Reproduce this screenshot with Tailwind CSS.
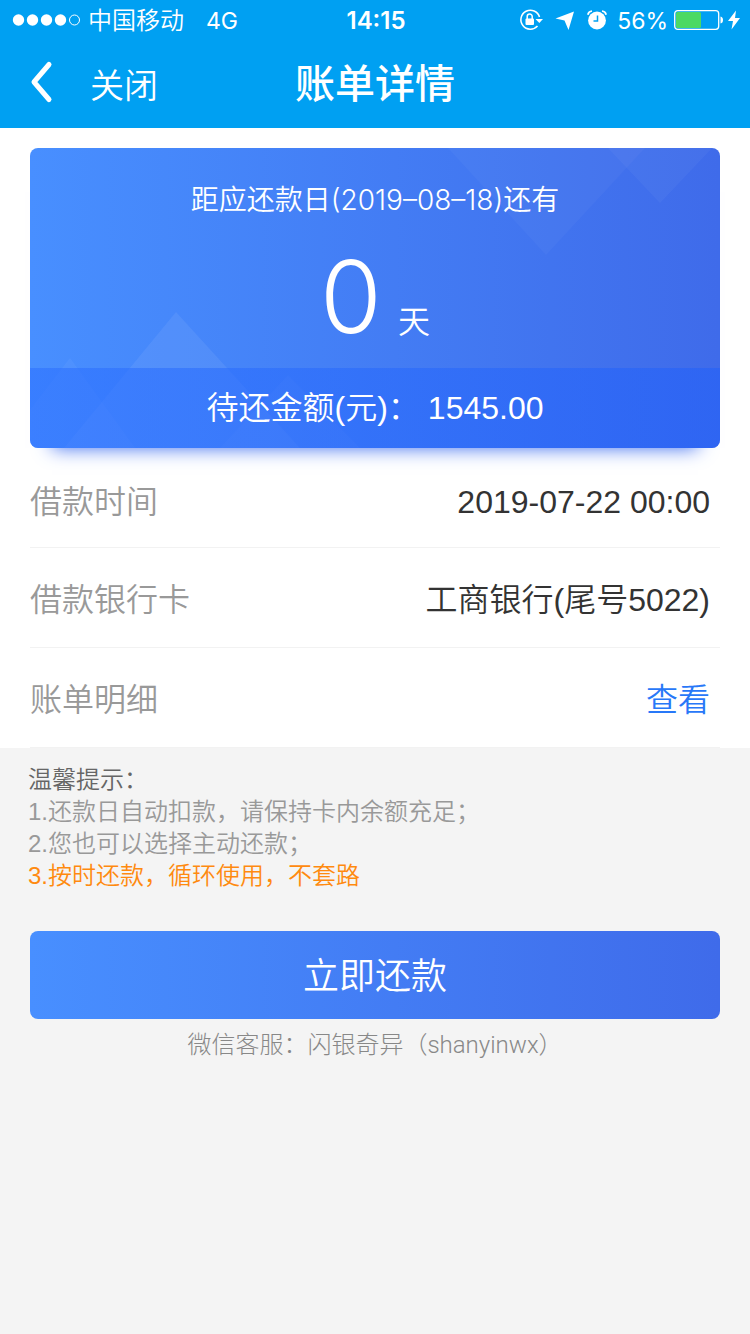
<!DOCTYPE html>
<html lang="zh-CN">
<head>
<meta charset="utf-8">
<meta name="viewport" content="width=device-width, initial-scale=1">
<title>账单详情</title>
<script src="https://cdn.jsdelivr.net/npm/@tailwindcss/browser@4"></script>
</head>
<body class="min-h-screen bg-[#f4f4f4] font-['Liberation_Sans','Noto_Sans_CJK_SC',sans-serif] font-[350] text-[#333]">
<header class="bg-[#00a0f2] text-white">
  <div class="grid h-10 grid-cols-[1fr_auto_1fr] items-center pr-2.5 pl-3 font-['Inter','Noto_Sans_CJK_SC',sans-serif] text-2xl leading-9 font-normal">
    <div class="flex items-center">
      <svg class="mr-1.5 h-3 w-[70px]" viewBox="0 0 70 12" fill="#fff" aria-hidden="true">
        <circle cx="6.500" cy="6" r="5.700"/><circle cx="20.500" cy="6" r="5.700"/><circle cx="34.500" cy="6" r="5.700"/><circle cx="48.500" cy="6" r="5.700"/><circle cx="62.500" cy="6" r="5" fill="none" stroke="#fff"/>
      </svg>
      <span class="mr-[22px] pt-0.5 font-[350]">中国移动</span>
      <span class="pt-0.5 text-[23px] leading-9">4G</span>
    </div>
    <span class="pt-0.5 text-2xl leading-9 font-semibold">14:15</span>
    <div class="flex items-center justify-end">
      <svg class="mr-3 h-6 w-6" viewBox="0 0 24 24" fill="none" stroke="#fff" aria-hidden="true">
        <path d="M20.500 9A9.500 9.500 0 1 0 18.500 18" stroke-width="1.500"/>
        <path d="M16.500 11H24L20.300 15Z" fill="#fff" stroke="none"/>
        <rect x="6.500" y="10.500" width="8.500" height="6.500" rx="1" fill="#fff" stroke="none"/>
        <path d="M8.200 11V8.500a2.500 2.500 0 0 1 5 0V11" stroke-width="1.500"/>
      </svg>
      <svg class="mr-3 h-5 w-5" viewBox="0 0 20 20" fill="#fff" aria-hidden="true"><path d="M19 1.500L.5 8.500L9.500 10.500L13.500 20Z"/></svg>
      <svg class="mr-2.5 h-5 w-5" viewBox="0 0 20 20" fill="none" stroke="#fff" aria-hidden="true">
        <circle cx="10" cy="10.500" r="8.900" fill="#fff" stroke="none"/>
        <path d="M.8 4.700Q1.500 1.500 5 1M19.200 4.700Q18.500 1.500 15 1" stroke-width="1.700"/>
        <path d="M10.500 5.500V11H6.500" stroke="#00a0f2" stroke-width="1.500"/>
      </svg>
      <span class="mr-1.5 pt-0.5 text-[23px] leading-9">56%</span>
      <svg class="mr-1 h-5 w-[50px]" viewBox="0 0 50 20" aria-hidden="true">
        <rect x=".7" y=".7" width="44" height="18.600" rx="3" fill="none" stroke="#fff" stroke-width="1.300"/>
        <rect x="2" y="2" width="25" height="16" rx="1.500" fill="#4cd964"/>
        <path d="M46.500 6.500Q49 7 49 10T46.500 13.500Z" fill="#fff"/>
      </svg>
      <svg class="h-5 w-3" viewBox="0 0 12 20" fill="#fff" aria-hidden="true"><path d="M8 .5L0 11H5L3.500 19.500L12 8H7Z"/></svg>
    </div>
  </div>
  <nav class="grid h-22 grid-cols-[1fr_auto_1fr] items-center pb-1">
    <div class="flex items-center pl-7">
      <button type="button" aria-label="返回" class="mr-[34px]">
        <svg class="h-11 w-7" viewBox="0 0 28 44" fill="none" stroke="#fff" stroke-width="5" stroke-linecap="round" stroke-linejoin="round" aria-hidden="true"><path d="M21 4.500L6 22L21 39.500"/></svg>
      </button>
      <button type="button" class="pt-2 text-[34px] leading-10">关闭</button>
    </div>
    <h1 class="pt-1 text-[40px] leading-10 font-medium">账单详情</h1>
  </nav>
</header>

<main>
  <div class="bg-white px-[30px] pt-5">
    <section class="relative rounded-lg bg-linear-to-r from-[#488fff] to-[#3f6bea] text-white shadow-[0_22px_18px_-22px_#3d6df0]">
      <svg class="absolute inset-0 h-full w-full" viewBox="0 0 690 300" preserveAspectRatio="none" fill="#fff" aria-hidden="true">
        <path d="M146 164L34 300H270Z" fill-opacity=".065"/>
        <path d="M40 210L0 262V300H105Z" fill-opacity=".045"/>
        <path d="M258 227L190 300H330Z" fill-opacity=".045"/>
        <path d="M418 0H615L516 107Z" fill-opacity=".03"/>
        <path d="M578 0H682L630 55Z" fill-opacity=".035"/>
      </svg>
      <div class="relative flex h-[220px] flex-col items-center pt-8 font-['Inter','Noto_Sans_CJK_SC',sans-serif]">
        <p class="text-[28px] leading-10">距应还款日(2019–08–18)还有</p>
        <p class="flex items-baseline gap-4 pt-0.5 leading-[150px]"><span class="text-[100px]">0</span><span class="text-[32px]">天</span></p>
      </div>
      <p class="relative flex h-20 items-center justify-center gap-2 rounded-b-lg bg-linear-to-r from-[#2e72ff]/60 to-[#2461f8]/60 text-[32px]"><span>待还金额(元)：</span><span>1545.00</span></p>
    </section>
    <dl class="text-[32px]">
      <div class="flex h-25 items-center justify-between border-b border-[#f2f2f2] pt-2 pr-2.5"><dt class="text-[#999]">借款时间</dt><dd>2019-07-22 00:00</dd></div>
      <div class="flex h-25 items-center justify-between border-b border-[#f2f2f2] pt-1 pr-2.5"><dt class="text-[#999]">借款银行卡</dt><dd>工商银行(尾号5022)</dd></div>
      <div class="flex h-25 items-center justify-between border-b border-[#f2f2f2] pt-1 pr-2.5"><dt class="text-[#999]">账单明细</dt><dd><a href="#detail" class="text-[#2878f8]">查看</a></dd></div>
    </dl>
  </div>

  <section class="px-7 pt-4 text-2xl leading-8 text-[#999]">
    <h2 class="text-[#666]">温馨提示：</h2>
    <p>1.还款日自动扣款，请保持卡内余额充足；</p>
    <p>2.您也可以选择主动还款；</p>
    <p class="text-[#ff8a0f]">3.按时还款，循环使用，不套路</p>
  </section>

  <div class="px-[30px] pt-[39px]">
    <button type="button" class="h-22 w-full rounded-lg bg-linear-to-r from-[#488fff] to-[#3f6bea] pt-1 text-4xl text-white">立即还款</button>
    <p class="pt-2.5 text-center font-['Roboto','Noto_Sans_CJK_SC',sans-serif] text-2xl leading-8 font-light text-[#888]">微信客服：闪银奇异（shanyinwx）</p>
  </div>
</main>
</body>
</html>
